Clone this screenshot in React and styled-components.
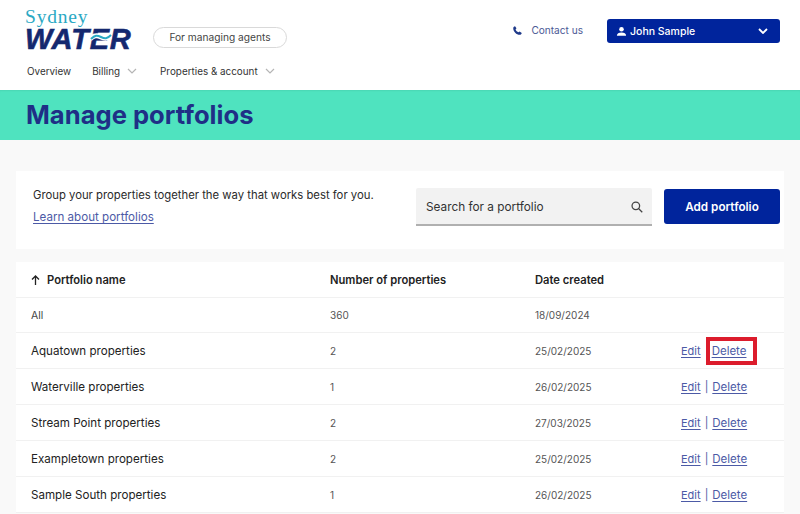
import React from "react";
import styled, { createGlobalStyle } from "styled-components";

const Global = createGlobalStyle`
  html, body { margin: 0; padding: 0; height: 514px; overflow: hidden; background: #f9f9f9; }
  body { font-family: Inter, "Liberation Sans", sans-serif; color: #2a2a2a; }
  * { box-sizing: border-box; }
`;
const Page = styled.div`width: 800px; height: 514px; overflow: hidden;`;
const Header = styled.header`
  height: 90px; background: #fff; padding: 8px 20px 0 25px;
  display: flex; justify-content: space-between;
`;
const BrandColumn = styled.div`display: flex; flex-direction: column;`;
const BrandRow = styled.div`display: flex; align-items: center; gap: 23px;`;
const Logo = styled.div`
  position: relative; width: 105px; height: 45px; display: flex; flex-direction: column;
`;
const LogoTop = styled.span`
  font-family: "Liberation Serif", serif; font-size: 19.5px; line-height: 19px; color: #2aa9c4; letter-spacing: .8px;
  margin: -1px 0 1px;
`;
const LogoBottom = styled.span`
  font-family: "Liberation Sans", sans-serif; font-weight: 700; font-style: italic;
  font-size: 29px; line-height: 24px; color: #14286f; letter-spacing: .8px;
  -webkit-text-stroke: .6px #14286f;
`;
const LogoWave = styled.svg`position: absolute; left: 65px; top: 25px; width: 22px; height: 10px;`;
const Pill = styled.div`
  margin-top: 13px; width: 134px; height: 21px; border: 1px solid #d9d9d9; border-radius: 11px;
  display: flex; align-items: center; justify-content: center;
  font-size: 10.2px; color: #444;
`;
const Nav = styled.nav`
  display: flex; align-items: center; margin-top: 9px; padding-left: 2px; height: 18px; font-size: 9.9px; color: #333;
`;
const NavItem = styled.span`
  display: inline-flex; align-items: center; gap: 7px; margin-right: ${p => p.$gap}px;
`;
const Right = styled.div`display: flex; align-items: center; gap: 24px; height: 30px; margin-top: 8px; `;
const Contact = styled.div`
  display: flex; align-items: center; gap: 8px; font-size: 10.1px; color: #4c5a96; margin-top: -2px;
`;
const UserButton = styled.div`
  width: 173px; height: 24px; background: #00249c; border-radius: 3px; color: #fff;
  display: flex; align-items: center; padding: 0 12px 0 9px; font-size: 10.5px; font-weight: 500; gap: 3px;
`;
const UserName = styled.span`flex: 1;`;
const Band = styled.div`
  height: 50px; background: #4fe3bf; padding-left: 26px; display: flex; align-items: center;
  box-shadow: inset 0 2px 2px -1px rgba(0,0,0,.06);
`;
const Title = styled.h1`
  margin: 0; font-size: 25.6px; font-weight: 700; color: #1f2f86; letter-spacing: 0;
  position: relative; top: -1px;
`;
const Main = styled.main`padding: 31px 16px 0;`;
const IntroCard = styled.section`
  height: 78px; background: #fff; display: flex; align-items: flex-start; padding: 17px 4px 0 17px;
  margin-bottom: 13px;
`;
const IntroText = styled.div`flex: 1; font-size: 11.3px; color: #2a2a2a;`;
const IntroLine = styled.div`line-height: 14px; margin-bottom: 8px;`;
const Link = styled.a`color: #4c5aa6; text-decoration: underline; text-underline-offset: 2px; font-size: ${p => p.$size || 11}px;`;
const SearchBox = styled.div`
  width: 236px; height: 38px; background: #f2f2f2; border-bottom: 2px solid #b0b0b0; border-radius: 2px 2px 0 0;
  display: flex; align-items: center; justify-content: space-between; padding: 1px 8px 0 10px;
  font-size: 11.8px; color: #333; margin-right: 12px; 
`;
const AddButton = styled.button`
  width: 116px; height: 35px; margin-top: 1px; background: #00249c; color: #fff; border: 0; border-radius: 3px;
  font: 600 11.7px Inter, sans-serif;
`;
const Table = styled.section`background: #fff;`;
const Row = styled.div`
  display: grid; grid-template-columns: 299px 205px 146px 1fr; align-items: center;
  height: ${p => p.$h}px; padding: ${p => p.$pt || 0}px 0 0 15px; border-bottom: 1px solid #f1f1f1; font-size: 11.6px; color: #222;
`;
const HeadCell = styled.div`font-weight: 600; color: #222; display: flex; align-items: center; gap: 7px; font-size: 11.2px;`;
const Muted = styled.span`color: #555; font-size: 10px;`;
const AllLabel = styled.span`color: #444; font-size: 10.5px;`;
const Actions = styled.div`display: flex; align-items: center; gap: 4px; position: relative; color: #4c5aa6; font-size: 11px;`;
const Highlight = styled.div`
  position: absolute; left: 25px; top: -7px; width: 51px; height: 28px; border: 4px solid #dc1c2c;
`;

const Chevron = ({ c = "#b5b5b5", w = 1.2 }) => (
  <svg width="10" height="6" viewBox="0 0 10 6" fill="none"><path d="M1 1l4 4 4-4" stroke={c} strokeWidth={w} /></svg>
);

const rows = [
  ["Aquatown properties", "2", "25/02/2025", true],
  ["Waterville properties", "1", "26/02/2025"],
  ["Stream Point properties", "2", "27/03/2025"],
  ["Exampletown properties", "2", "25/02/2025"],
  ["Sample South properties", "1", "26/02/2025"],
];

export default function App() {
  return (
    <Page>
      <Global />
      <Header>
        <BrandColumn>
          <BrandRow>
            <Logo>
              <LogoTop>Sydney</LogoTop>
              <LogoBottom>WATER</LogoBottom>
              <LogoWave viewBox="0 0 22 10" fill="none">
                <path d="M0 6c4-4 7-4 11-2s7 2 11-2" stroke="#fff" strokeWidth="5" />
                <path d="M1 6c4-4 6-4 10-2s6 2 10-2" stroke="#2aa9c4" strokeWidth="2" />
              </LogoWave>
            </Logo>
            <Pill>For managing agents</Pill>
          </BrandRow>
          <Nav>
            <NavItem $gap={21}>Overview</NavItem>
            <NavItem $gap={23}>Billing <Chevron /></NavItem>
            <NavItem $gap={0}>Properties &amp; account <Chevron /></NavItem>
          </Nav>
        </BrandColumn>
        <Right>
          <Contact>
            <svg width="11" height="11" viewBox="0 0 24 24" fill="#1f3a8a">
              <path d="M6.6 2.5l3.2 4.6-2 2.6c1.2 2.8 3.300 4.900 6.300 6.300l2.500-2 4.700 3.200c-.6 2.300-2 4-4.300 4C9.500 21.200 2.800 14.500 2.700 6.900c0-2.300 1.600-3.800 3.900-4.400z" />
            </svg>
            Contact us
          </Contact>
          <UserButton>
            <svg width="11" height="11" viewBox="0 0 24 24" fill="#fff">
              <circle cx="12" cy="7" r="5" /><path d="M2 21c0-5 4-7 10-7s10 2 10 7z" />
            </svg>
            <UserName>John Sample</UserName>
            <Chevron c="#fff" w={1.8} />
          </UserButton>
        </Right>
      </Header>
      <Band><Title>Manage portfolios</Title></Band>
      <Main>
        <IntroCard>
          <IntroText>
            <IntroLine>Group your properties together the way that works best for you.</IntroLine>
            <Link $size={11.6}>Learn about portfolios</Link>
          </IntroText>
          <SearchBox>
            Search for a portfolio
            <svg width="14" height="14" viewBox="0 0 24 24" fill="none" stroke="#444" strokeWidth="2.200">
              <circle cx="10" cy="10" r="6.500" /><path d="M15 15l6 6" />
            </svg>
          </SearchBox>
          <AddButton>Add portfolio</AddButton>
        </IntroCard>
        <Table>
          <Row $h={36}>
            <HeadCell>
              <svg width="9" height="10" viewBox="0 0 9 10" fill="none" stroke="#222" strokeWidth="1.300"><path d="M4.500 10V1M1 4.500L4.500 1 8 4.500" /></svg>
              Portfolio name
            </HeadCell>
            <HeadCell>Number of properties</HeadCell>
            <HeadCell>Date created</HeadCell>
            <div />
          </Row>
          <Row $h={35}>
            <AllLabel>All</AllLabel><Muted>360</Muted><Muted>18/09/2024</Muted><div />
          </Row>
          {rows.map(([name, count, date, hl]) => (
            <Row $h={36} $pt={1} key={name}>
              <span>{name}</span>
              <Muted>{count}</Muted>
              <Muted>{date}</Muted>
              <Actions>
                <Link>Edit</Link>
                {hl ? <span style={{ width: 3 }} /> : <span>|</span>}
                <Link $size={11.5}>Delete</Link>
                {hl && <Highlight />}
              </Actions>
            </Row>
          ))}
        </Table>
      </Main>
    </Page>
  );
}
